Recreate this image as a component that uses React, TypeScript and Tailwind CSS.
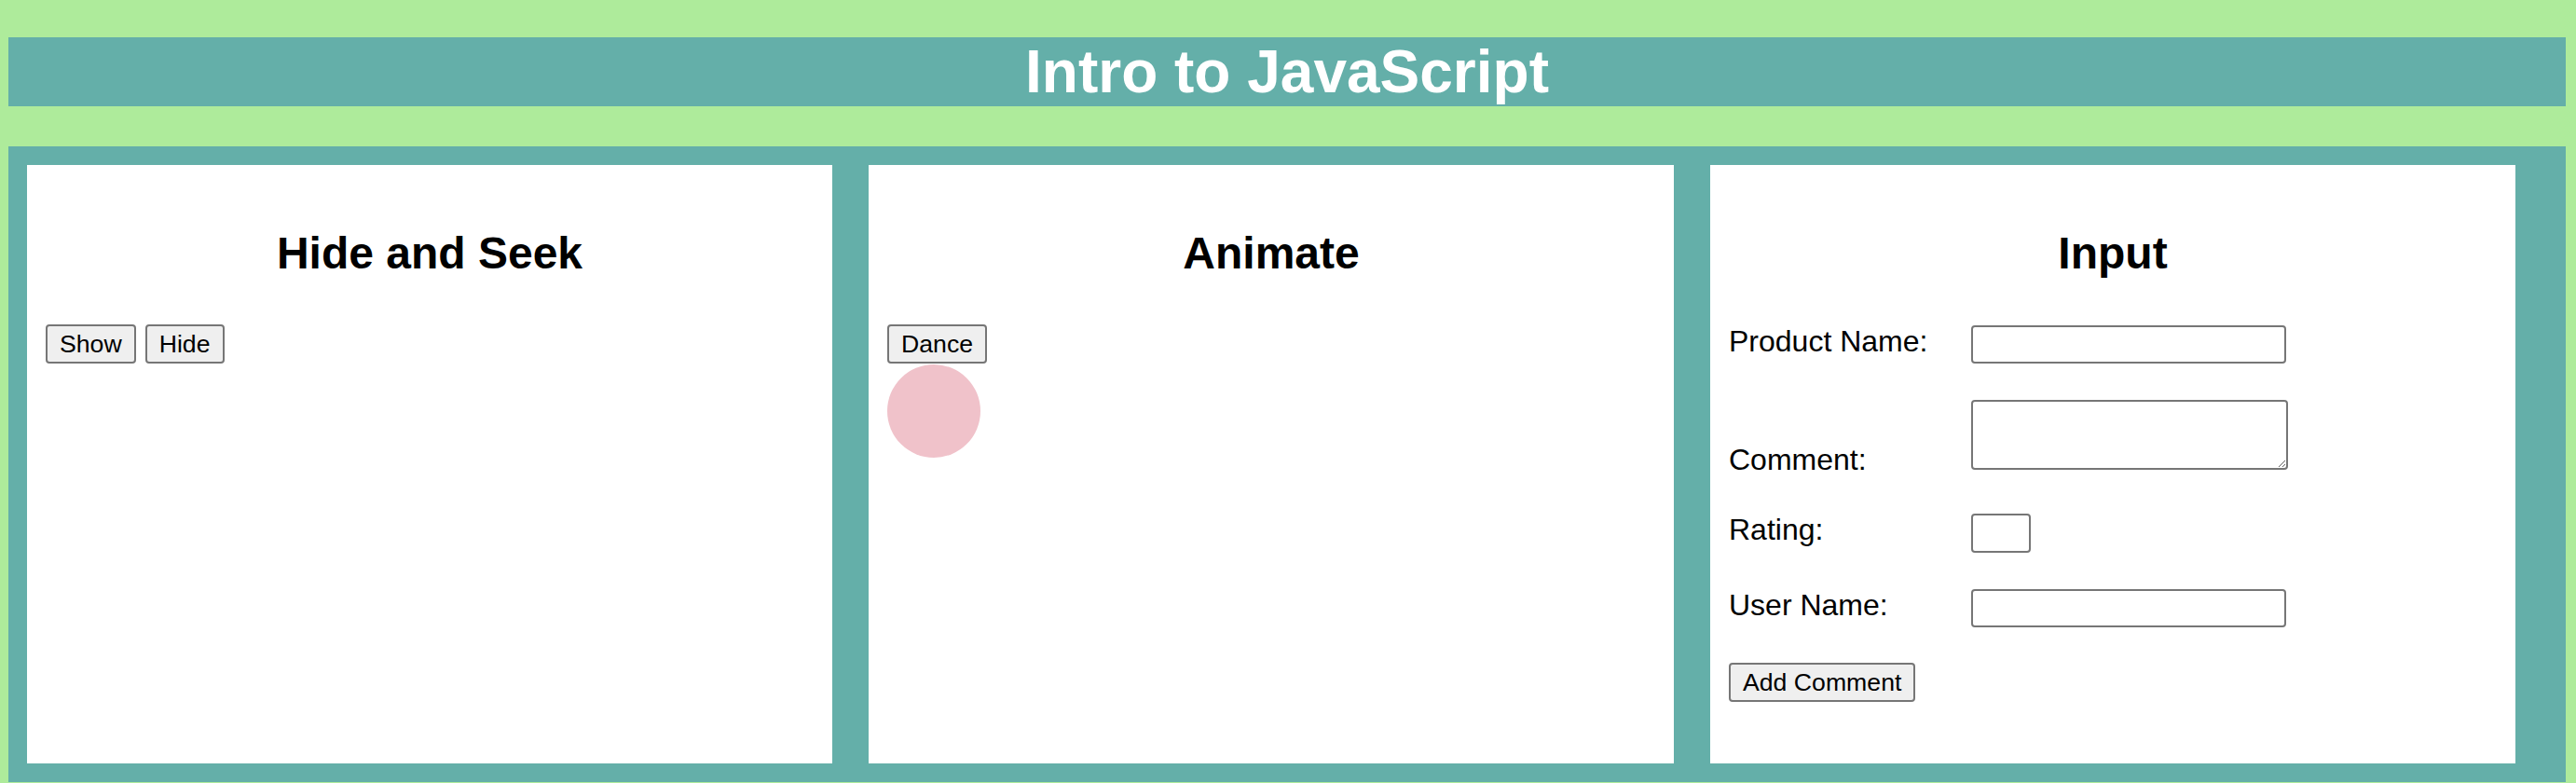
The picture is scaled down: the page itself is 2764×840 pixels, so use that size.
import React from "react";

const btn =
  "h-[42px] px-[13px] border-2 border-[#767676] rounded-[4px] bg-[#efefef] text-[26.67px] leading-[30px] text-black flex items-center justify-center";
const field = "border-2 border-[#767676] rounded-[4px] bg-white";

export default function App() {
  return (
    <div className="min-h-screen bg-[#aeeb9b] font-['Liberation_Sans',Arial,sans-serif] text-black pt-[40px] pb-px">
      <h1 className="ml-[9px] mr-[11px] h-[74px] bg-[#64afa9] text-white text-[64px] font-bold leading-[74px] text-center">
        Intro to JavaScript
      </h1>
      <main className="mt-[43px] ml-[9px] mr-[11px] bg-[#64afa9] p-[20px] flex gap-[39px]">
        {/* Card 1 */}
        <section className="w-[864px] h-[642px] bg-white px-[20px] pt-[67px]">
          <h2 className="text-[48px] font-bold leading-[55px] text-center">Hide and Seek</h2>
          <div className="mt-[49px] flex gap-[10px]">
            <button className={btn}>Show</button>
            <button className={btn}>Hide</button>
          </div>
        </section>
        {/* Card 2 */}
        <section className="w-[864px] h-[642px] bg-white px-[20px] pt-[67px]">
          <h2 className="text-[48px] font-bold leading-[55px] text-center">Animate</h2>
          <div className="mt-[49px] flex">
            <button className={btn}>Dance</button>
          </div>
          <div className="mt-px w-[100px] h-[100px] rounded-full bg-[#f0c2ca]" />
        </section>
        {/* Card 3 */}
        <section className="w-[864px] h-[642px] bg-white px-[20px] pt-[67px]">
          <h2 className="text-[48px] font-bold leading-[55px] text-center">Input</h2>
          <div className="mt-[49px] flex flex-col text-[32px] leading-[37px]">
            <div className="flex items-start">
              <label className="w-[260px] shrink-0">Product Name:</label>
              <input type="text" className={`${field} mt-px w-[338px] h-[41px]`} />
            </div>
            <div className="mt-[39px] flex items-start">
              <label className="w-[260px] shrink-0 mt-[46px]">Comment:</label>
              <textarea className={`${field} w-[340px] h-[75px] resize`} />
            </div>
            <div className="mt-[38px] flex items-start">
              <label className="w-[260px] shrink-0">Rating:</label>
              <input type="text" className={`${field} mt-px w-[64px] h-[42px]`} />
            </div>
            <div className="mt-[38px] flex items-start">
              <label className="w-[260px] shrink-0">User Name:</label>
              <input type="text" className={`${field} mt-px w-[338px] h-[41px]`} />
            </div>
            <div className="mt-[38px] flex">
              <button className={btn}>Add Comment</button>
            </div>
          </div>
        </section>
      </main>
    </div>
  );
}
